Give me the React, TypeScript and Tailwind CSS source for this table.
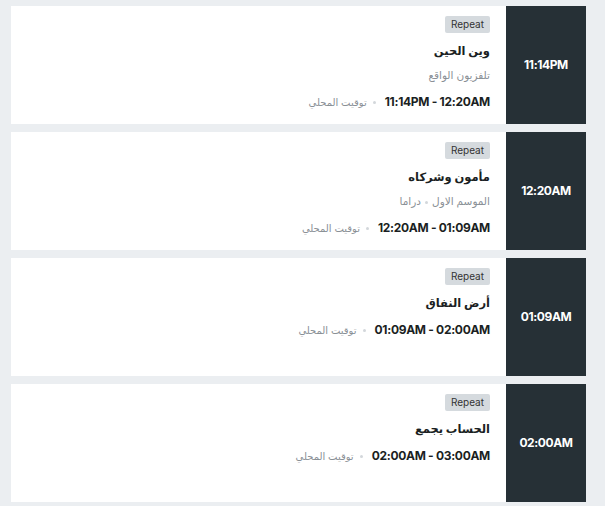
import React from "react";

type Item = { time: string; title: string; sub?: string[]; range: string };

const items: Item[] = [
  { time: "11:14PM", title: "وين الحين", sub: ["تلفزيون الواقع"], range: "11:14PM - 12:20AM" },
  { time: "12:20AM", title: "مأمون وشركاه", sub: ["الموسم الاول", "دراما"], range: "12:20AM - 01:09AM" },
  { time: "01:09AM", title: "أرض النفاق", range: "01:09AM - 02:00AM" },
  { time: "02:00AM", title: "الحساب يجمع", range: "02:00AM - 03:00AM" },
];

export default function App() {
  return (
    <div
      className="min-h-[506px] w-[605px] bg-[#ebeef1] pl-[11px] pr-[19px] pt-[6px]"
      style={{ fontFamily: "Inter, 'Noto Sans', 'DejaVu Sans', sans-serif" }}
    >
      <div className="flex flex-col gap-[8px]">
        {items.map((it) => (
          <div key={it.time} dir="rtl" className="flex h-[118px] bg-white">
            <div className="flex w-[80px] shrink-0 items-center justify-center bg-[#263036] text-[12px] font-bold tracking-[-0.4px] text-white" dir="ltr">
              {it.time}
            </div>
            <div className="flex flex-1 flex-col items-start pr-[16px] pt-[10px]">
              <span className="rounded-[2px] bg-[#d5dade] px-[6px] py-[2px] text-[10px] leading-[13px] text-[#333]" dir="ltr">
                Repeat
              </span>
              <div className="mt-[9px] text-[11.5px] font-bold leading-[18px] text-[#1b1f23]">{it.title}</div>
              {it.sub && (
                <div className="mt-[8px] flex items-center text-[10.5px] leading-[16px] text-[#8a9096]">
                  {it.sub.map((s, i) => (
                    <React.Fragment key={s}>
                      {i > 0 && <span className="mx-[4px] inline-block h-[3px] w-[3px] rounded-full bg-[#d3d7db]" />}
                      <span>{s}</span>
                    </React.Fragment>
                  ))}
                </div>
              )}
              <div className="mt-[9px] flex items-center">
                <span dir="ltr" className="text-[12px] font-bold leading-[18px] tracking-[-0.3px] text-[#1b1f23]">{it.range}</span>
                <span className="ml-[6px] mr-[9px] inline-block h-[3px] w-[3px] rounded-full bg-[#d3d7db]" />
                <span className="text-[10px] text-[#8a9096]">توقيت المحلي</span>
              </div>
            </div>
          </div>
        ))}
      </div>
    </div>
  );
}
